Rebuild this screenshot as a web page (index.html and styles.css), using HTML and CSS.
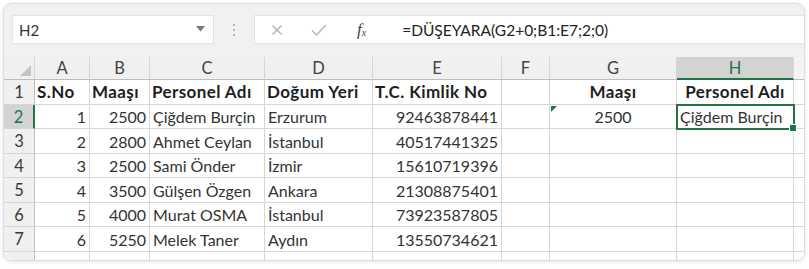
FILE: index.html
```html
<!DOCTYPE html>
<html lang="tr">
<head>
<meta charset="utf-8">
<title>Excel DÜŞEYARA</title>
<link rel="stylesheet" href="styles.css">
</head>
<body>
<div class="frame">
  <div class="toolbar">
    <div class="namebox">
      <span class="name">H2</span>
      <svg class="caret" width="9" height="6" viewBox="0 0 9 6"><path d="M0 0 L9 0 L4.5 5.5 Z" fill="#7a7a7a"/></svg>
    </div>
    <div class="grip"><i></i><i></i><i></i></div>
    <div class="formula">
      <svg class="ico" width="12" height="12" viewBox="0 0 12 12"><path d="M1.5 1.5 L10.5 10.5 M10.5 1.5 L1.5 10.5" stroke="#b0b0b0" stroke-width="1.4" fill="none"/></svg>
      <svg class="ico ok" width="16" height="12" viewBox="0 0 16 12"><path d="M1 6.5 L5.5 11 L15 1" stroke="#b8b8b8" stroke-width="1.5" fill="none"/></svg>
      <span class="fx"><i>f</i><sub>x</sub></span>
      <span class="ftext">=DÜŞEYARA(G2+0;B1:E7;2;0)</span>
    </div>
  </div>
  <div class="sheet">
    <div class="corner"><span class="tri"></span></div>
    <div class="ch">A</div><div class="ch">B</div><div class="ch">C</div><div class="ch">D</div><div class="ch">E</div><div class="ch">F</div><div class="ch">G</div><div class="ch sel">H</div><div class="ch end"></div>

    <div class="rh">1</div>
    <div class="c b">S.No</div><div class="c b">Maaşı</div><div class="c b">Personel Adı</div><div class="c b">Doğum Yeri</div><div class="c b">T.C. Kimlik No</div><div class="c"></div><div class="c b ctr">Maaşı</div><div class="c b ctr">Personel Adı</div><div class="c end"></div>

    <div class="rh sel">2</div>
    <div class="c r">1</div><div class="c r">2500</div><div class="c">Çiğdem Burçin</div><div class="c">Erzurum</div><div class="c r">92463878441</div><div class="c"></div><div class="c ctr warn">2500</div><div class="c active">Çiğdem Burçin<span class="handle"></span></div><div class="c end"></div>

    <div class="rh">3</div>
    <div class="c r">2</div><div class="c r">2800</div><div class="c">Ahmet Ceylan</div><div class="c">İstanbul</div><div class="c r">40517441325</div><div class="c"></div><div class="c"></div><div class="c"></div><div class="c end"></div>

    <div class="rh">4</div>
    <div class="c r">3</div><div class="c r">2500</div><div class="c">Sami Önder</div><div class="c">İzmir</div><div class="c r">15610719396</div><div class="c"></div><div class="c"></div><div class="c"></div><div class="c end"></div>

    <div class="rh">5</div>
    <div class="c r">4</div><div class="c r">3500</div><div class="c">Gülşen Özgen</div><div class="c">Ankara</div><div class="c r">21308875401</div><div class="c"></div><div class="c"></div><div class="c"></div><div class="c end"></div>

    <div class="rh">6</div>
    <div class="c r">5</div><div class="c r">4000</div><div class="c">Murat OSMA</div><div class="c">İstanbul</div><div class="c r">73923587805</div><div class="c"></div><div class="c"></div><div class="c"></div><div class="c end"></div>

    <div class="rh">7</div>
    <div class="c r">6</div><div class="c r">5250</div><div class="c">Melek Taner</div><div class="c">Aydın</div><div class="c r">13550734621</div><div class="c"></div><div class="c"></div><div class="c"></div><div class="c end"></div>

    <div class="rh"></div>
    <div class="c"></div><div class="c"></div><div class="c"></div><div class="c"></div><div class="c"></div><div class="c"></div><div class="c"></div><div class="c"></div><div class="c end"></div>
  </div>
</div>
</body>
</html>
```
FILE: styles.css
```css
html, body {
  margin: 0;
  padding: 0;
  background: #ffffff;
}
body {
  font-family: Lato, "Open Sans", sans-serif;
  width: 809px;
  height: 269px;
  overflow: hidden;
}
.frame {
  margin: 3px 0 0 3px;
  width: 800px;
  height: 256px;
  border: 1px solid #dedede;
  border-radius: 9px;
  background: #f1f1f1;
  box-shadow: 0 1px 4px rgba(0,0,0,0.12);
  overflow: hidden;
}
.toolbar {
  display: flex;
  align-items: center;
  height: 29px;
  margin: 11px 0 0 8px;
}
.namebox {
  width: 202px;
  height: 29px;
  box-sizing: border-box;
  background: #fff;
  border: 1px solid #e2e2e2;
  display: flex;
  align-items: center;
  justify-content: space-between;
  padding: 0 8px 0 6px;
}
.name {
  font-size: 15px;
  color: #333;
}
.caret { margin-top: -2px; }
.grip {
  width: 40px;
  display: flex;
  flex-direction: column;
  align-items: center;
  gap: 3px;
}
.grip i {
  width: 2px;
  height: 2px;
  background: #b5b5b5;
  display: block;
}
.formula {
  flex: 1;
  height: 29px;
  box-sizing: border-box;
  background: #fff;
  border: 1px solid #e2e2e2;
  border-right: none;
  display: flex;
  align-items: center;
  padding-left: 16px;
}
.ico { margin-right: 28px; }
.ico.ok { margin-right: 30px; }
.fx {
  font-family: "Liberation Serif", serif;
  font-size: 17px;
  color: #444;
  margin-right: 36px;
}
.fx sub { font-size: 10px; font-style: italic; vertical-align: -1px; }
.ftext {
  font-size: 15.5px;
  color: #222;
}
.sheet {
  margin: 13px 0 0 0;
  display: grid;
  grid-template-columns: 31px 55px 60px 115px 108px 129px 48px 127px 117px 10px;
  grid-template-rows: 23px 25px 24px 25px 24px 25px 24px 25px 12px;
  background: #fff;
}
.corner, .ch, .rh {
  background: #f0f0f0;
  color: #444;
  font-size: 16px;
  box-sizing: border-box;
  border-right: 1px solid #d6d6d6;
  border-bottom: 1px solid #bdbdbd;
  display: flex;
  align-items: center;
  justify-content: center;
}
.ch { font-size: 16.5px; }
.corner { position: relative; }
.tri {
  position: absolute;
  right: 3px;
  bottom: 3px;
  width: 0;
  height: 0;
  border-left: 11px solid transparent;
  border-bottom: 11px solid #c4c4c4;
}
.ch.end { border-right: none; background: #f4f4f4; }
.ch.sel {
  background: #d3d3d3;
  color: #217346;
  border-bottom: 2px solid #217346;
}
.rh {
  border-bottom: 1px solid #d6d6d6;
  border-right: 1px solid #bdbdbd;
  font-size: 16.5px;
  color: #3a3a3a;
}
.rh.sel {
  background: #d3d3d3;
  color: #217346;
  border-right: 2px solid #217346;
}
.c {
  box-sizing: border-box;
  border-right: 1px solid #d6d6d6;
  border-bottom: 1px solid #d6d6d6;
  font-size: 16px;
  color: #333;
  display: flex;
  align-items: flex-end;
  padding: 0 3px 2px 3px;
  white-space: nowrap;
  overflow: visible;
  position: relative;
}
.c.b {
  font-weight: 700;
  color: #1e1e1e;
  font-size: 17px;
  letter-spacing: 0.4px;
  padding-left: 2px;
  padding-right: 2px;
}
.c.r { justify-content: flex-end; }
.c.ctr { justify-content: center; }
.c.end { border-right: none; }
.c.warn::before {
  content: "";
  position: absolute;
  left: 1px;
  top: 1px;
  border-top: 6px solid #217346;
  border-right: 6px solid transparent;
}
.c.active {
  outline: 2px solid #217346;
  outline-offset: -1px;
  z-index: 2;
}
.handle {
  position: absolute;
  right: -4px;
  bottom: -4px;
  width: 6px;
  height: 6px;
  background: #217346;
  border: 1px solid #fff;
}
```
